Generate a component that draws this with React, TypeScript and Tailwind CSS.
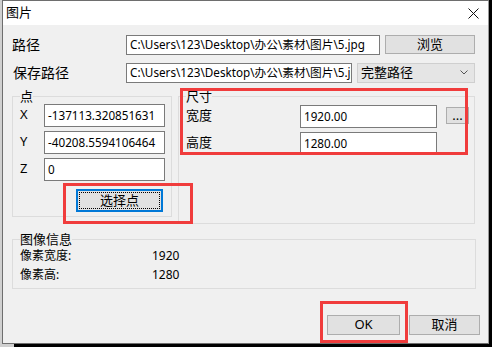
import { useState } from 'react';

const font = { fontFamily: '"Noto Sans", "Noto Sans CJK SC", sans-serif' };

function TextBox({ value, className }: { value: string; className: string }) {
  return (
    <div className={`bg-white border border-[#7a7a7a] flex items-center pl-[3px] overflow-hidden whitespace-nowrap text-[11.7px] text-black ${className}`}>
      {value}
    </div>
  );
}

function Btn({ label, className }: { label: string; className: string }) {
  return (
    <div className={`bg-[#e1e1e1] border border-[#adadad] flex items-center justify-center text-[13px] text-black ${className}`}>
      {label}
    </div>
  );
}

export default function App() {
  const [mode] = useState('完整路径');

  return (
    <div className="relative w-[492px] h-[347px] flex flex-col bg-black overflow-hidden" style={font}>
      <div className="flex h-[344px]">
        <div className="w-[2px] bg-[#d0d0d0]" />
        <div className="w-[487px] flex flex-col border border-[#6e6e6e] border-r-[#9a9a9a] bg-[#f0f0f0]">
          {/* title bar */}
          <div className="h-[24px] bg-white flex items-center justify-between pl-[3px] pr-[9px]">
            <span className="text-[13px] text-black">图片</span>
            <svg width="11" height="11" viewBox="0 0 11 11">
              <path d="M0.5 0.5 L10.5 10.5 M10.5 0.5 L0.5 10.5" stroke="#111" strokeWidth="1" />
            </svg>
          </div>

          {/* body */}
          <div className="flex flex-col text-black">
            <div className="flex items-center mt-[9px] ml-[9px]">
              <span className="w-[114px] text-[14px]">路径</span>
              <TextBox value="C:\Users\123\Desktop\办公\素材\图片\5.jpg" className="w-[254px] h-[20px]" />
              <Btn label="浏览" className="w-[90px] h-[19px] ml-[5px]" />
            </div>

            <div className="flex items-center mt-[7px] ml-[10px]">
              <span className="w-[113px] text-[14px]">保存路径</span>
              <TextBox value="C:\Users\123\Desktop\办公\素材\图片\5.jpg" className="w-[226px] h-[20px]" />
              <div className="w-[118px] h-[20px] ml-[5px] bg-[#e5e5e5] border border-[#cfcfcf] flex items-center justify-between pl-[3px] pr-[6px] text-[13px]">
                <span>{mode}</span>
                <svg width="8" height="5" viewBox="0 0 8 5">
                  <path d="M0.5 0.5 L4 4 L7.5 0.5" stroke="#555" strokeWidth="1" fill="none" />
                </svg>
              </div>
            </div>

            <div className="flex ml-[9px] mt-[6px] gap-[6px]">
              <fieldset className="w-[160px] h-[128px] border border-[#dcdcdc] pl-[7px]">
                <legend className="text-[13px] leading-[14px]">点</legend>
                <div className="flex flex-col gap-[4px] mt-[1px]">
                  {[
                    ['X', '-137113.320851631'],
                    ['Y', '-40208.5594106464'],
                    ['Z', '0'],
                  ].map(([k, v]) => (
                    <div key={k} className="flex items-start">
                      <span className="w-[24px] text-[13px] leading-[16px] mt-[2px]">{k}</span>
                      <TextBox value={v} className="w-[121px] h-[23px]" />
                    </div>
                  ))}
                </div>
                <div className="ml-[56px] mt-[8px] w-[87px] h-[23px] bg-[#e1e1e1] border-2 border-[#0078d7] flex">
                  <div className="flex-1 m-[1px] border border-dotted border-black flex items-center justify-center text-[13px]">
                    选择点
                  </div>
                </div>
              </fieldset>

              <fieldset className="w-[297px] h-[135px] border border-[#dcdcdc] pl-[7px]">
                <legend className="text-[13px] leading-[14px]">尺寸</legend>
                <div className="flex flex-col gap-[4px] mt-[2px]">
                  <div className="flex items-start">
                    <span className="w-[114px] text-[13px] leading-[16px] mt-[2px]">宽度</span>
                    <TextBox value="1920.00" className="w-[137px] h-[23px]" />
                    <Btn label="..." className="w-[23px] h-[17px] ml-[9px] mt-[2px] text-[12px]" />
                  </div>
                  <div className="flex items-start">
                    <span className="w-[114px] text-[13px] leading-[16px] mt-[2px]">高度</span>
                    <TextBox value="1280.00" className="w-[137px] h-[23px]" />
                  </div>
                </div>
              </fieldset>
            </div>

            <fieldset className="ml-[9px] mt-[8px] w-[464px] h-[57px] border border-[#dcdcdc] pl-[7px]">
              <legend className="text-[13px] leading-[14px]">图像信息</legend>
              <div className="flex flex-col text-[12px] leading-[19px]">
                <div className="flex">
                  <span className="w-[132px]">像素宽度:</span>
                  <span>1920</span>
                </div>
                <div className="flex">
                  <span className="w-[132px]">像素高:</span>
                  <span>1280</span>
                </div>
              </div>
            </fieldset>

            <div className="flex justify-end gap-[9px] mt-[26px] mr-[8px]">
              <Btn label="OK" className="w-[73px] h-[20px]" />
              <Btn label="取消" className="w-[71px] h-[20px]" />
            </div>
          </div>
        </div>
        <div className="flex-1 bg-black" />
      </div>
      <div className="flex flex-1">
        <div className="w-[14px] bg-[#d0d0d0]" />
        <div className="flex-1 bg-black" />
      </div>

      {/* red annotation boxes */}
      <div className="absolute left-[180px] top-[88px] w-[288px] h-[67px] border-[3px] border-[#f03c3c]" />
      <div className="absolute left-[63px] top-[183px] w-[130px] h-[41px] border-[3px] border-[#f03c3c]" />
      <div className="absolute left-[320px] top-[301px] w-[88px] h-[42px] border-[3px] border-[#f03c3c]" />
    </div>
  );
}
